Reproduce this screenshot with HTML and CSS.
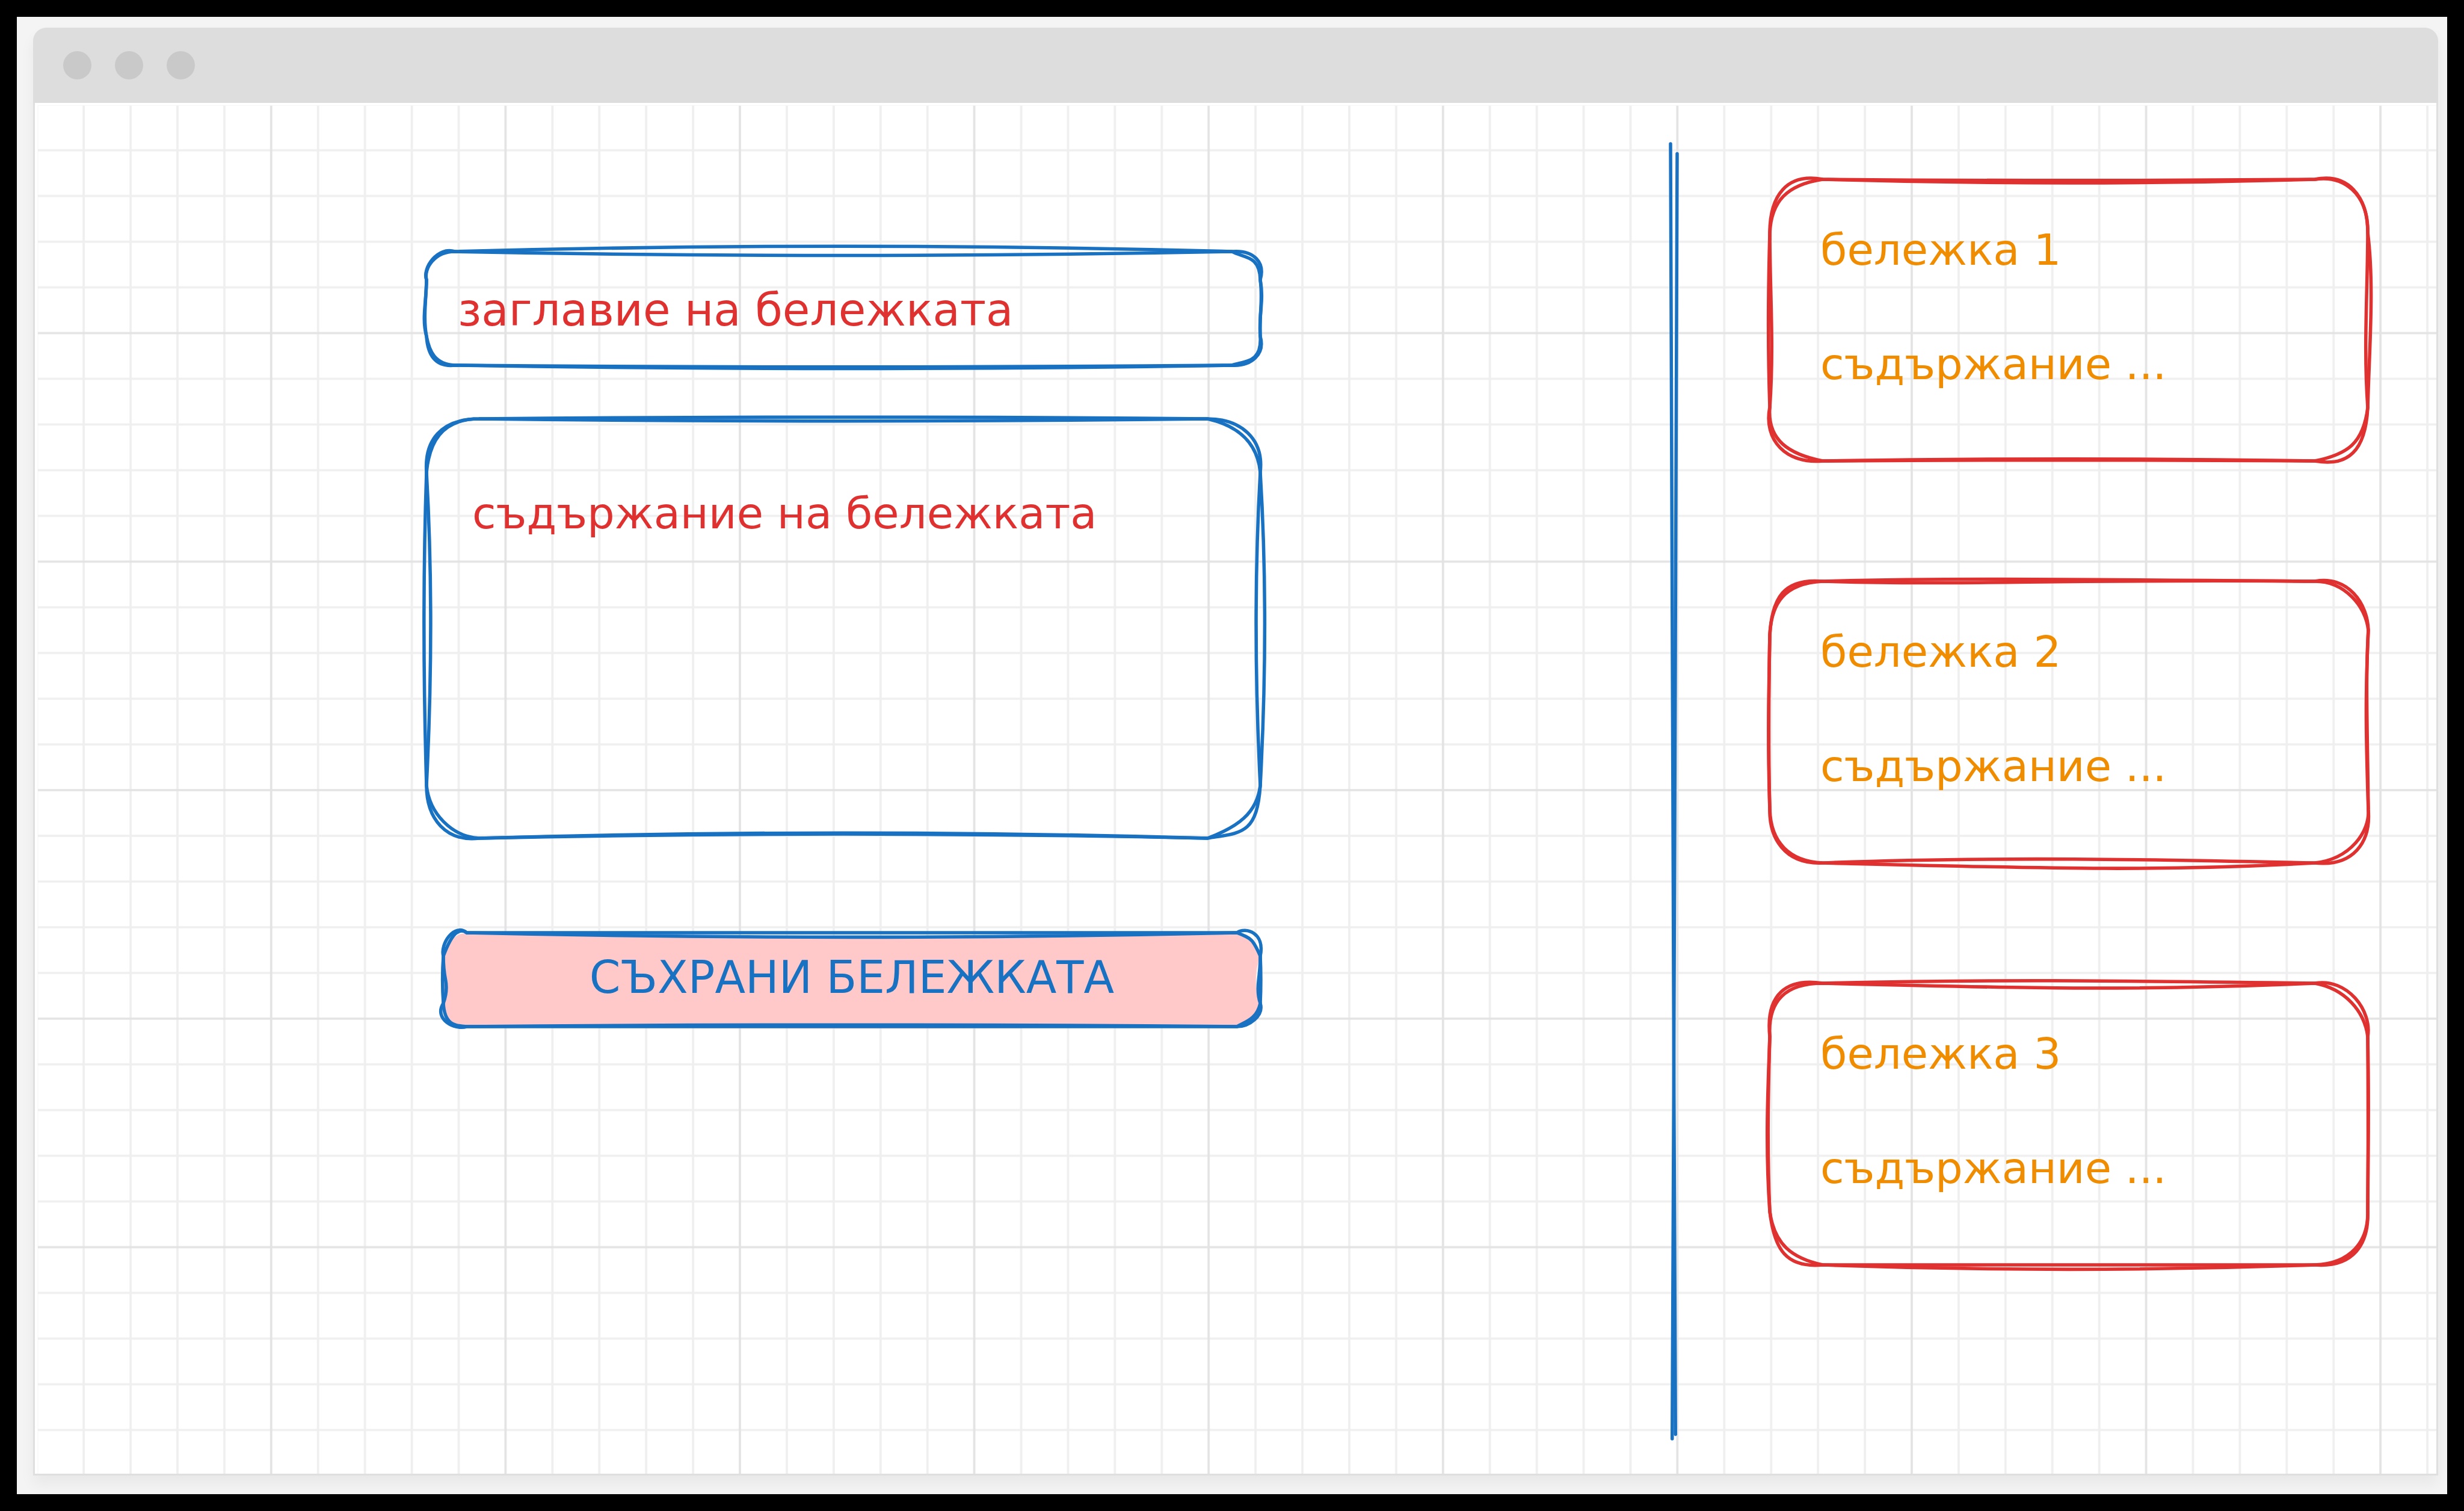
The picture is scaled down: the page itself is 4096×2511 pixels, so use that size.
FILE: index.html
```html
<!DOCTYPE html>
<html lang="bg">
<head>
<meta charset="utf-8">
<meta name="viewport" content="width=device-width, initial-scale=1">
<title>Бележки</title>
<link rel="stylesheet" href="styles.css">
</head>
<body>
<div class="frame">
  <div class="window">
    <header class="titlebar">
      <span class="dot"></span>
      <span class="dot"></span>
      <span class="dot"></span>
    </header>

    <div class="canvas">
      <svg class="paper" viewBox="62.8 185.2 4322.5 2465.4" preserveAspectRatio="none" aria-hidden="true">
        <defs>
          <pattern id="squares" patternUnits="userSpaceOnUse" x="277.2" y="393.7" width="421.85" height="411">
            <path class="minor" d="M42.2 0V411M126.6 0V411M295.3 0V411M379.7 0V411M0 41.1H421.85M0 123.3H421.85M0 287.7H421.85M0 369.9H421.85"/>
            <path class="major" d="M210.9 0V411M0 205.5H421.85"/>
          </pattern>
        </defs>
        <rect x="68" y="190" width="4318" height="2461" fill="url(#squares)"/>
      </svg>

      <form class="editor">
        <div class="field field-title">
          <input class="text" type="text" aria-label="Заглавие" value="заглавие на бележката">
          <svg class="sketch" viewBox="0 0 1501 205" preserveAspectRatio="none" aria-hidden="true">
            <path d="M51 0Q750 -19 1450 0C1490 -3 1510 20 1501 51C1508 90 1498 110 1501 153C1510 185 1485 207 1450 205Q750 217 51 205C15 209 2 185 0 153C-9 120 0 90 0 51C-8 30 20 -10 51 0"/>
            <path d="M51 0Q750 14 1450 0C1470 12 1500 5 1501 51C1506 90 1499 110 1501 153C1504 200 1475 197 1450 205Q750 211 51 205C15 203 5 180 0 153C-6 120 -1 90 0 51C-5 30 15 0 51 0"/>
          </svg>
        </div>

        <div class="field field-content">
          <textarea class="text" aria-label="Съдържание">съдържание на бележката</textarea>
          <svg class="sketch" viewBox="0 0 1501 755" preserveAspectRatio="none" aria-hidden="true">
            <path d="M95 0Q750 -6 1406 0C1465 0 1508 35 1501 96Q1517 360 1501 660C1495 750 1465 745 1406 755Q750 736 95 755C35 762 0 720 0 660Q-9 360 0 96C-4 40 25 0 95 0"/>
            <path d="M95 0Q750 8 1406 0C1450 10 1495 35 1501 96Q1486 360 1501 660C1495 710 1460 735 1406 755Q750 740 95 755C45 752 5 710 0 660Q15 360 0 96C5 45 25 0 95 0"/>
          </svg>
        </div>

        <button class="field save" type="button">
          <svg class="sketch" viewBox="0 0 1471 169" preserveAspectRatio="none" aria-hidden="true">
            <path class="wash" d="M42 1Q735 12 1429 1C1460 5 1465 20 1471 42Q1455 85 1471 127C1465 155 1450 166 1429 169Q735 176 42 169C15 170 5 150 0 127V42C8 20 20 0 42 1Z"/>
            <path d="M42 0H1429C1445 -11 1480 0 1471 42Q1473 85 1471 127C1478 150 1450 169 1429 169Q735 169 42 169C20 176 -18 155 0 127Q-3 85 0 42C-6 20 20 -18 42 0"/>
            <path d="M42 0Q735 16 1429 0C1455 10 1458 12 1471 42Q1471 60 1468 85T1471 127C1465 155 1445 160 1429 169Q735 163 42 169C20 168 2 165 0 127Q8 105 4 85T0 42C12 10 25 -12 42 0"/>
          </svg>
          <span class="save-label">СЪХРАНИ БЕЛЕЖКАТА</span>
        </button>
      </form>

      <svg class="divider" viewBox="0 0 12 2330" preserveAspectRatio="none" aria-hidden="true">
        <path d="M0 0Q2 1000 6 1657L9 2322"/>
        <path d="M12 18Q9 1000 6 1657L3 2330"/>
      </svg>

      <section class="notes">
        <article class="note">
          <h2 class="note-title">бележка 1</h2>
          <p class="note-text">съдържание ...</p>
          <svg class="sketch" viewBox="0 0 1076 507" preserveAspectRatio="none" aria-hidden="true">
            <path d="M95 0Q538 4 981 0C1040 -12 1076 30 1076 96C1088 190 1079 300 1076 411C1068 475 1040 495 981 507Q538 500 95 507C30 513 -12 470 0 410C-4 300 -3 200 0 96C0 30 30 -12 95 0"/>
            <path d="M95 0Q538 13 981 0C1035 -8 1074 28 1076 88C1076 200 1068 300 1076 411C1072 490 1040 518 981 507Q538 504 95 507C35 495 -5 470 0 410C8 300 0 200 0 96C3 40 30 10 95 0"/>
          </svg>
        </article>

        <article class="note">
          <h2 class="note-title">бележка 2</h2>
          <p class="note-text">съдържание ...</p>
          <svg class="sketch" viewBox="0 0 1076 507" preserveAspectRatio="none" aria-hidden="true">
            <path d="M95 0C300 -6 500 -4 981 0C1040 -11 1076 40 1077 88C1072 200 1072 260 1077 411C1082 470 1050 514 981 507C700 501 400 495 95 507C25 510 -1 460 0 411C-4 300 -2 200 0 96C4 30 25 -6 95 0"/>
            <path d="M95 0C350 8 500 -4 981 0C1035 0 1073 46 1077 88C1072 180 1075 240 1077 411C1080 450 1045 500 981 507C700 523 500 517 95 507C35 504 2 470 0 411C-3 300 -2 200 0 96C3 40 25 4 95 0"/>
          </svg>
        </article>

        <article class="note">
          <h2 class="note-title">бележка 3</h2>
          <p class="note-text">съдържание ...</p>
          <svg class="sketch" viewBox="0 0 1076 507" preserveAspectRatio="none" aria-hidden="true">
            <path d="M95 0C400 -7 600 -5 981 0C1040 -10 1084 50 1076 96C1079 250 1076 300 1076 411C1078 470 1050 512 981 507H95C40 495 8 470 0 411C-8 300 -4 200 0 96C-8 20 30 -10 95 0"/>
            <path d="M95 0C450 9 650 14 981 0C1035 10 1070 50 1076 96C1077 250 1077 300 1076 411C1077 465 1045 505 981 507Q538 523 95 507C30 513 8 480 0 411C-5 300 -3 200 0 96C-4 30 30 0 95 0"/>
          </svg>
        </article>
      </section>
    </div>
  </div>
</div>
</body>
</html>
```
FILE: styles.css
```css
* {
  box-sizing: border-box;
}

body {
  margin: 0;
  min-height: 100vh;
  padding: 28px;
  display: flex;
  background: #000;
  font-family: "DejaVu Sans", sans-serif;
  font-size: 72px;
  line-height: 90px;
}

.frame {
  flex: 1;
  display: flex;
  padding: 18px 15px 31px 27px;
  background: #f4f4f4;
  overflow: hidden;
}

.window {
  flex: 1;
  display: flex;
  flex-direction: column;
  border-radius: 22px 22px 0 0;
  box-shadow: 0 14px 24px rgba(0, 0, 0, 0.05);
}

.titlebar {
  display: flex;
  align-items: center;
  gap: 39px;
  height: 125px;
  padding-left: 50px;
  border-radius: 22px 22px 0 0;
  background: #ddd;
}

.dot {
  width: 47px;
  height: 47px;
  border-radius: 50%;
  background: #c9c9c9;
}

.canvas {
  position: relative;
  flex: 1;
  display: grid;
  grid-template-columns: 651fr 1386fr 682fr 11fr 154fr 994fr 114fr;
  border: 3px solid #dfdfdf;
  border-top: 0;
  background: #fff;
}

.paper {
  position: absolute;
  inset: 0;
  width: 100%;
  height: 100%;
}

.minor,
.major {
  fill: none;
  stroke: #efefef;
  stroke-width: 4;
}

.major {
  stroke: #e3e3e3;
}

.editor {
  grid-column: 2;
  position: relative;
  display: flex;
  flex-direction: column;
  padding-top: 247px;
  color: #e03131;
}

.field {
  position: relative;
}

.field-title {
  height: 189px;
  margin-bottom: 89px;
  font-size: 74px;
}

.field-content {
  height: 697px;
  margin-bottom: 157px;
}

.text {
  display: block;
  width: 100%;
  height: 100%;
  border: 0;
  outline: 0;
  background: none;
  color: inherit;
  font: inherit;
  resize: none;
}

.field-title .text {
  padding: 4px 52px 0;
}

.field-content .text {
  padding: 112px 76px;
}

.sketch,
.divider {
  fill: none;
  stroke: #1971c2;
  stroke-width: 6;
  stroke-linecap: round;
  overflow: visible;
  pointer-events: none;
}

.sketch {
  position: absolute;
  inset: 0;
  width: 100%;
  height: 100%;
}

.wash {
  fill: #ffc9c9;
  stroke: none;
}

.save {
  height: 156px;
  margin-left: 28px;
  padding: 0 0 8px;
  border: 0;
  background: none;
  color: #1971c2;
  font: inherit;
  font-size: 74px;
}

.save-label {
  position: relative;
}

.divider {
  grid-column: 4;
  position: relative;
  width: 100%;
  height: calc(100% - 126px);
  margin-top: 68px;
}

.notes {
  grid-column: 6;
  position: relative;
  display: flex;
  flex-direction: column;
  gap: 200px;
  padding-top: 127px;
}

.note {
  position: relative;
  display: flex;
  flex-direction: column;
  gap: 100px;
  height: 468px;
  padding: 72px 84px;
  color: #f08c00;
}

.note .sketch {
  stroke: #e03131;
}

.note-title,
.note-text {
  margin: 0;
  font-size: inherit;
  font-weight: 400;
}
```
